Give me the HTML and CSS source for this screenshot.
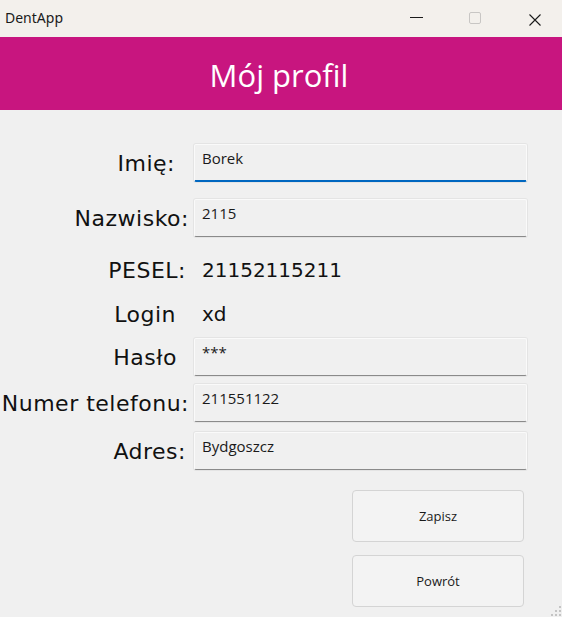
FILE: index.html
```html
<!DOCTYPE html>
<html lang="pl">
<head>
<meta charset="utf-8">
<title>DentApp</title>
<link rel="stylesheet" href="styles.css">
</head>
<body>
<div class="window">
  <div class="titlebar">
    <span class="app-name">DentApp</span>
    <div class="controls">
      <span class="ctl ctl-min"><svg width="13" height="2" viewBox="0 0 13 2"><rect x="0" y="0" width="13" height="1" fill="#1a1a1a"/></svg></span>
      <span class="ctl ctl-max"><svg width="12" height="12" viewBox="0 0 12 12"><rect x="0.5" y="0.5" width="11" height="11" rx="1.5" fill="none" stroke="#c8c6c4"/></svg></span>
      <span class="ctl ctl-close"><svg width="12" height="12" viewBox="0 0 12 12"><path d="M0.5 0.5 L11.5 11.5 M11.5 0.5 L0.5 11.5" stroke="#1a1a1a" stroke-width="1.1" fill="none"/></svg></span>
    </div>
  </div>
  <div class="header"><h1 class="title">Mój profil</h1></div>
  <div class="content">
    <div class="form">
      <div class="row r-imie"><span class="label l-imie">Imię:</span><div class="field focused">Borek</div></div>
      <div class="row r-nazwisko"><span class="label l-nazwisko">Nazwisko:</span><div class="field">2115</div></div>
      <div class="row r-pesel"><span class="label l-pesel">PESEL:</span><span class="value">21152115211</span></div>
      <div class="row r-login"><span class="label l-login">Login</span><span class="value">xd</span></div>
      <div class="row r-haslo"><span class="label l-haslo">Hasło</span><div class="field">***</div></div>
      <div class="row r-tel"><span class="label l-tel">Numer telefonu:</span><div class="field">211551122</div></div>
      <div class="row r-adres"><span class="label l-adres">Adres:</span><div class="field">Bydgoszcz</div></div>
    </div>
    <div class="buttons">
      <button class="btn">Zapisz</button>
      <button class="btn">Powrót</button>
    </div>
    <svg class="grip" width="10" height="10" viewBox="0 0 10 10"><g fill="#c4c4c4"><rect x="8" y="0" width="2" height="2"/><rect x="4" y="4" width="2" height="2"/><rect x="8" y="4" width="2" height="2"/><rect x="0" y="8" width="2" height="2"/><rect x="4" y="8" width="2" height="2"/><rect x="8" y="8" width="2" height="2"/></g></svg>
  </div>
</div>
</body>
</html>
```
FILE: styles.css
```css
* { box-sizing: border-box; }
html, body { margin: 0; padding: 0; }
body {
  width: 562px;
  height: 617px;
  overflow: hidden;
  background: #f0f0f0;
}
.window {
  display: flex;
  flex-direction: column;
  width: 562px;
  height: 617px;
}
.titlebar {
  height: 37px;
  background: #f3f0ec;
  display: flex;
  align-items: center;
  justify-content: space-between;
  padding-left: 5px;
}
.app-name {
  font-family: "Noto Sans", "Open Sans", sans-serif;
  font-size: 14px;
  color: #1a1a1a;
  margin-top: -2px;
}
.controls {
  display: flex;
  align-items: center;
  height: 100%;
}
.ctl {
  display: flex;
  align-items: center;
  justify-content: center;
  height: 100%;
}
.ctl-min { width: 13px; margin-right: 46px; margin-top: -2px; }
.ctl-max { width: 12px; margin-right: 48px; margin-top: -1px; }
.ctl-close { width: 12px; margin-right: 21px; margin-top: 3px; }

.header {
  height: 73px;
  background: #c8157f;
  display: flex;
  align-items: center;
  justify-content: center;
}
.title {
  margin: 0;
  font-family: "Comic Sans MS", "Open Sans", sans-serif;
  font-weight: normal;
  font-size: 31px;
  color: #ffffff;
  margin-left: -4px;
  margin-top: 2px;
}
.content {
  flex: 1;
  position: relative;
  padding-top: 34px;
}
.form {
  display: flex;
  flex-direction: column;
}
.row {
  display: grid;
  grid-template-columns: 194px 333px;
  align-items: center;
}
.r-nazwisko { margin-top: 17px; }
.r-pesel { margin-top: 15px; height: 36px; }
.r-login { margin-top: 8px; height: 36px; }
.r-haslo { margin-top: 6px; }
.r-tel { margin-top: 8px; }
.r-adres { margin-top: 10px; }

.label {
  font-family: "Comic Sans MS", "DejaVu Sans", sans-serif;
  font-size: 22px;
  letter-spacing: 0.5px;
  color: #111;
  text-align: right;
  white-space: nowrap;
}
.l-imie { padding-right: 19px; }
.l-nazwisko { padding-right: 5px; }
.l-pesel { padding-right: 8px; }
.l-login { padding-right: 18px; }
.l-haslo { padding-right: 17px; }
.l-tel { padding-right: 5px; }
.l-adres { padding-right: 8px; }

.value {
  font-family: "Comic Sans MS", "DejaVu Sans", sans-serif;
  font-size: 20px;
  color: #111;
  padding-left: 8px;
}
.field {
  height: 38px;
  background: #f0f0f0;
  border: 1px solid #fafafa;
  border-bottom: 1px solid #8a8a8a;
  box-shadow: 0 0 0 1px #e4e4e4;
  border-radius: 2px;
  font-family: "Open Sans", "Noto Sans", sans-serif;
  font-size: 15px;
  color: #1a1a1a;
  padding: 3px 0 0 7px;
  line-height: 21px;
}
.field.focused {
  border-bottom: 2px solid #0067c0;
}
.buttons {
  display: flex;
  flex-direction: column;
  gap: 13px;
  margin-top: 20px;
  margin-left: 352px;
  width: 172px;
}
.btn {
  height: 52px;
  background: #f3f3f3;
  border: 1px solid #d4d4d4;
  border-radius: 4px;
  font-family: "Open Sans", "Noto Sans", sans-serif;
  font-size: 13px;
  color: #1a1a1a;
  padding: 0;
}
.grip {
  position: absolute;
  right: 1px;
  bottom: 1px;
}
```
